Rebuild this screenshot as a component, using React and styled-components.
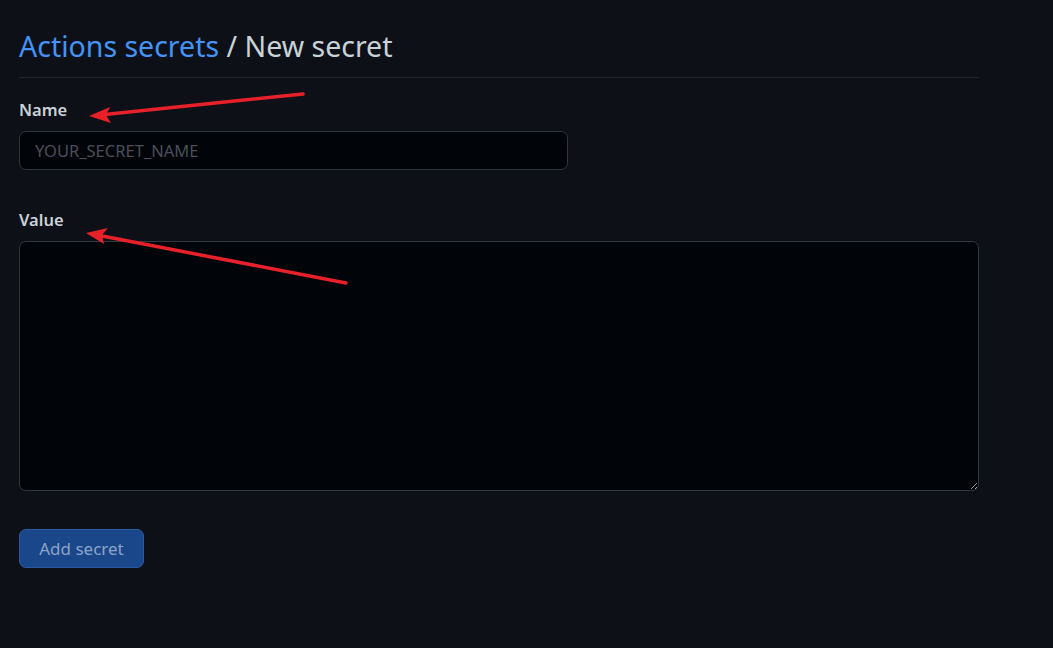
import React from 'react'
import styled, { createGlobalStyle } from 'styled-components'

const GlobalStyle = createGlobalStyle`
  html, body {
    margin: 0;
    padding: 0;
    background: #0d1117;
    height: 100%;
  }
  body {
    font-family: "Segoe UI", "Noto Sans", "Liberation Sans", sans-serif;
    color: #c9d1d9;
  }
`

const Page = styled.div`
  position: relative;
  width: 1053px;
  height: 648px;
  overflow: hidden;
  box-sizing: border-box;
  padding: 26px 0 0 19px;
`

const Main = styled.div`
  width: 960px;
`

const Header = styled.div`
  border-bottom: 1px solid #21262d;
  padding-bottom: 11px;
  margin-bottom: 20px;
`

const Title = styled.h1`
  margin: 0;
  font-size: 28.5px;
  font-weight: 400;
  line-height: 40px;
  color: #c9d1d9;
`

const Crumb = styled.a`
  color: #4493f8;
  text-decoration: none;
`

const Field = styled.div`
  display: flex;
  flex-direction: column;
  margin-bottom: ${p => p.gap || 0}px;
`

const Label = styled.label`
  font-size: 16.5px;
  font-weight: 600;
  line-height: 24px;
  color: #c9d1d9;
  margin-bottom: 9px;
`

const Input = styled.input`
  width: 549px;
  height: 39px;
  box-sizing: border-box;
  background: #010409;
  border: 1px solid #30363d;
  border-radius: 7px;
  padding: 0 15px;
  font-family: inherit;
  font-size: 16.5px;
  color: #c9d1d9;
  outline: none;
  &::placeholder {
    color: #484f58;
  }
`

const TextArea = styled.textarea`
  width: 960px;
  height: 250px;
  box-sizing: border-box;
  background: #010409;
  border: 1px solid #30363d;
  border-radius: 7px;
  padding: 10px 15px;
  font-family: inherit;
  font-size: 16px;
  color: #c9d1d9;
  outline: none;
  resize: vertical;
  display: block;
`

const Button = styled.button`
  width: 125px;
  height: 39px;
  box-sizing: border-box;
  background: #1a468a;
  border: 1px solid #2a5aa4;
  border-radius: 7px;
  color: #8da3c6;
  font-family: inherit;
  font-size: 17px;
  cursor: default;
`

const Overlay = styled.svg`
  position: absolute;
  left: 0;
  top: 0;
  pointer-events: none;
`

export default function App() {
  return (
    <>
      <GlobalStyle />
      <Page>
        <Main>
          <Header>
            <Title>
              <Crumb href="#">Actions secrets</Crumb> / New secret
            </Title>
          </Header>
          <Field gap={38}>
            <Label>Name</Label>
            <Input placeholder="YOUR_SECRET_NAME" />
          </Field>
          <Field gap={38}>
            <Label>Value</Label>
            <TextArea />
          </Field>
          <Button disabled>Add secret</Button>
        </Main>
        <Overlay width="1053" height="648">
          <g stroke="#e8202a" strokeWidth="3.5" strokeLinecap="round" fill="none">
            <line x1="303" y1="94" x2="100" y2="115" />
            <line x1="346" y1="283" x2="97" y2="235" />
          </g>
          <g fill="#e8202a">
            <polygon points="89,116 110,107 106,115 111,123" />
            <polygon points="86,233 108,228 102,235 104,244" />
          </g>
        </Overlay>
      </Page>
    </>
  )
}
